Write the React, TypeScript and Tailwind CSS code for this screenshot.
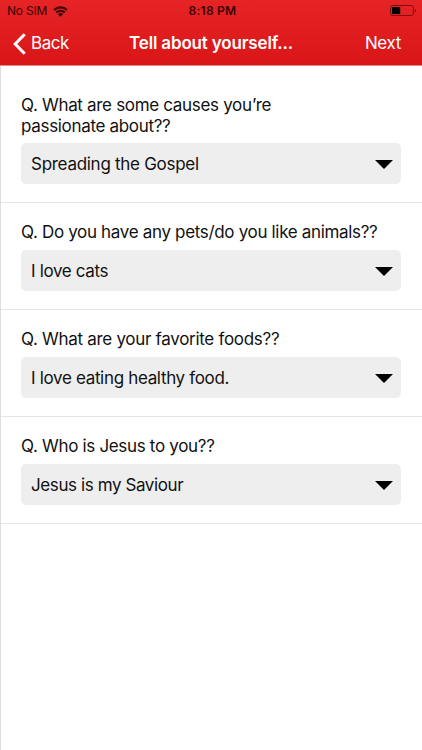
import React, { useState } from 'react';

interface Question {
  id: number;
  title: string;
  answer: string;
  titleClass: string;
  answerClass: string;
}

const questions: Question[] = [
  {
    id: 1,
    title: 'What are some causes you’re passionate about??',
    answer: 'Spreading the Gospel',
    titleClass: 'max-w-[290px] leading-[21px] tracking-[-0.32px]',
    answerClass: 'tracking-[-0.28px]',
  },
  {
    id: 2,
    title: 'Do you have any pets/do you like animals??',
    answer: 'I love cats',
    titleClass: 'leading-[20px] tracking-[-0.33px]',
    answerClass: 'tracking-[-0.36px]',
  },
  {
    id: 3,
    title: 'What are your favorite foods??',
    answer: 'I love eating healthy food.',
    titleClass: 'leading-[20px] tracking-[-0.3px]',
    answerClass: 'tracking-[-0.33px]',
  },
  {
    id: 4,
    title: 'Who is Jesus to you??',
    answer: 'Jesus is my Saviour',
    titleClass: 'leading-[20px] tracking-[-0.32px]',
    answerClass: 'tracking-[-0.4px]',
  },
];

const WifiIcon = () => (
  <svg width="15" height="11" viewBox="0 0 15 11" fill="none" stroke="currentColor" strokeWidth="2.1">
    <path d="M1 4.1a9.2 9.2 0 0 1 13 0" />
    <path d="M3.2 6.6a6.1 6.1 0 0 1 8.6 0" />
    <path d="M7.5 10.8 4.9 8.3a3.7 3.7 0 0 1 5.2 0Z" fill="currentColor" stroke="none" />
  </svg>
);

const BatteryIcon = () => (
  <svg width="27" height="12" viewBox="0 0 27 12" fill="none">
    <rect x="0.5" y="0.5" width="23" height="10" rx="2.2" stroke="#7d0d0f" />
    <rect x="2" y="2" width="8.2" height="7" rx="0.5" fill="#000" />
    <path d="M24.8 3.7c1.8.6 1.8 3.1 0 3.7Z" fill="#7d0d0f" />
  </svg>
);

const StatusBar = () => (
  <div className="grid h-[22px] grid-cols-3 items-center pl-[7px] pr-[5px] text-[#3a0405]">
    <div className="flex items-center gap-[6px] text-[12px]">
      <span className="tracking-[-0.2px]">No SIM</span>
      <WifiIcon />
    </div>
    <div className="pl-px text-center text-[12px] font-semibold tracking-[0.25px]">8:18 PM</div>
    <div className="flex justify-end">
      <BatteryIcon />
    </div>
  </div>
);

const NavBar = () => (
  <div className="grid h-[43px] grid-cols-[100px_1fr_100px] items-center pl-[13px] pr-[21px] text-[17px] text-white">
    <button className="flex items-center gap-[5px] tracking-[-0.45px]">
      <svg width="13" height="22" viewBox="0 0 13 22" fill="none" stroke="currentColor" strokeWidth="3">
        <path d="M11.7 1.2 2.2 11l9.5 9.8" />
      </svg>
      Back
    </button>
    <h1 className="whitespace-nowrap pl-2 text-center font-semibold tracking-[-0.16px]">Tell about yourself...</h1>
    <button className="text-right tracking-[-0.35px]">Next</button>
  </div>
);

const QuestionRow = ({ question }: { question: Question }) => (
  <li className="flex h-[107px] flex-col border-b border-[#e6e6e6] pb-[18px] pl-[20px] pr-[21px] pt-[19px] first:h-[137px] first:pt-[29px]">
    <p className={`text-[17px] ${question.titleClass}`}>{`Q. ${question.title}`}</p>
    <button className="mt-auto flex h-[41px] w-full shrink-0 items-center justify-between rounded-[5px] bg-[#eeeeee] pl-[10px] pr-[8px] text-[17px]">
      <span className={`pt-[3px] ${question.answerClass}`}>{question.answer}</span>
      <svg className="mt-[2px]" width="18" height="9" viewBox="0 0 18 9">
        <path d="M0 0h18L9 9Z" fill="#000" />
      </svg>
    </button>
  </li>
);

const App: React.FC = () => {
  const [items] = useState<Question[]>(questions);

  return (
    <div className="h-[750px] w-[422px] overflow-hidden bg-white font-['Inter',sans-serif] text-[#111111]">
      <header className="h-[66px] border-b border-[#e88a8b] bg-linear-to-b from-[#e62325] to-[#d91517]">
        <StatusBar />
        <NavBar />
      </header>
      <ul className="h-[684px] border-l border-[#dddddd]">
        {items.map((question) => (
          <QuestionRow key={question.id} question={question} />
        ))}
      </ul>
    </div>
  );
};

export default App;
